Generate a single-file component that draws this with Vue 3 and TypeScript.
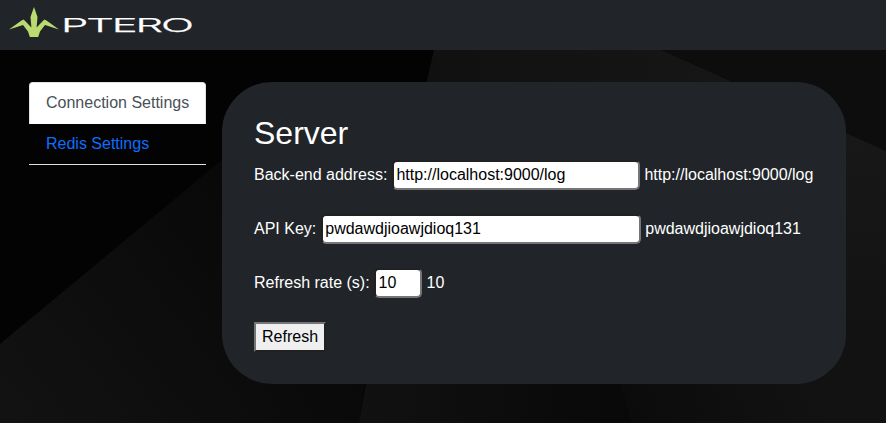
<script setup lang="ts">
import { ref } from 'vue'

const tabs = ['Connection Settings', 'Redis Settings']
const active = ref(0)
const address = ref('http://localhost:9000/log')
const apiKey = ref('pwdawdjioawjdioq131')
const rate = ref('10')
</script>

<template>
  <div class="page">
    <svg class="backdrop" viewBox="0 0 886 423" preserveAspectRatio="none" aria-hidden="true">
      <defs>
        <linearGradient id="lower" gradientUnits="userSpaceOnUse" x1="0" y1="400" x2="260" y2="200">
          <stop offset="0" stop-color="#121212" />
          <stop offset="1" stop-color="#080808" />
        </linearGradient>
        <linearGradient id="upper" x1="0" y1="0" x2="1" y2="0">
          <stop offset="0" stop-color="#101010" />
          <stop offset="1" stop-color="#161616" />
        </linearGradient>
        <linearGradient id="right" x1="0" y1="0" x2="0" y2="1">
          <stop offset="0" stop-color="#181818" />
          <stop offset="1" stop-color="#121212" />
        </linearGradient>
        <linearGradient id="base" x1="0" y1="0" x2="1" y2="0">
          <stop offset="0" stop-color="#111111" />
          <stop offset="1" stop-color="#080808" />
        </linearGradient>
        <linearGradient id="corner" gradientUnits="userSpaceOnUse" x1="620" y1="400" x2="800" y2="340">
          <stop offset="0" stop-color="#0b0b0b" />
          <stop offset="1" stop-color="#121212" />
        </linearGradient>
      </defs>
      <rect width="886" height="423" fill="#030304" />
      <path d="M0 344L222 160L400 160L359 423H0Z" fill="url(#lower)" />
      <path d="M434 50H662L733 82L700 200H400Z" fill="url(#upper)" />
      <path d="M662 50H886V151L846 133L733 82Z" fill="#0d0d0d" />
      <path d="M846 133L886 151V340H800V133Z" fill="url(#right)" />
      <path d="M366 384H620L632 423H359Z" fill="url(#base)" />
      <path d="M620 384L600 320H886V423H632Z" fill="url(#corner)" />
    </svg>

    <header class="navbar">
      <svg class="crane" viewBox="0 0 50 30" aria-hidden="true">
        <path
          d="M25 0L28.5 10L27.6 20.5L35.3 12.5L37.5 13.5L50 22.5L36 18L31 24.5L29.2 30H20.8L19 24.5L14 18L0 22.5L12.5 13.5L14.7 12.5L22.4 20.5L21.5 10Z"
          fill="#bbda70"
        />
      </svg>
      <span class="wordmark"><span class="letters">PTERO</span></span>
    </header>

    <main class="content">
      <nav class="tabs">
        <a
          v-for="(tab, i) in tabs"
          :key="tab"
          class="tab"
          :class="{ active: active === i }"
          @click="active = i"
        >{{ tab }}</a>
      </nav>

      <section class="card">
        <h2>Server</h2>
        <div class="row">
          <label for="address">Back-end address:</label>
          <input id="address" v-model="address" class="address" />
          <span>{{ address }}</span>
        </div>
        <div class="row">
          <label for="key">API Key:</label>
          <input id="key" v-model="apiKey" class="key" />
          <span>{{ apiKey }}</span>
        </div>
        <div class="row">
          <label for="rate">Refresh rate (s):</label>
          <input id="rate" v-model="rate" class="rate" />
          <span>{{ rate }}</span>
        </div>
        <button class="refresh" type="button">Refresh</button>
      </section>
    </main>
  </div>
</template>

<style>
body {
  margin: 0;
  background: #030304;
}
</style>

<style scoped>
* {
  box-sizing: border-box;
}

.page {
  position: relative;
  isolation: isolate;
  height: 423px;
  overflow: hidden;
  font: 16px/24px 'Liberation Sans', Arial, sans-serif;
  color: #fff;
}

.backdrop {
  position: absolute;
  inset: 0;
  z-index: -1;
  width: 100%;
  height: 100%;
}

.navbar {
  display: flex;
  height: 50px;
  padding: 7px 9px;
  background: #212529;
}

.crane {
  width: 50px;
  height: 30px;
}

.wordmark {
  width: 132px;
  height: 30px;
  margin-left: 2px;
}

.letters {
  display: block;
  width: max-content;
  font: 300 18.5px/37px Inter, sans-serif;
  letter-spacing: -0.9px;
  transform: scaleX(2.35);
  transform-origin: 0 0;
  -webkit-text-stroke: 0.25px #fff;
}

.content {
  display: flex;
  align-items: flex-start;
  gap: 16px;
  padding: 32px 40px 0 29px;
}

.tabs {
  display: flex;
  flex-direction: column;
  flex: none;
  width: 177px;
  border-bottom: 1px solid #dee2e6;
}

.tab {
  height: 40px;
  padding: 7px 16px;
  border: 1px solid transparent;
  border-radius: 4px 4px 0 0;
  color: #0d6efd;
  white-space: nowrap;
  cursor: pointer;
}

.tab.active {
  height: 42px;
  padding-top: 8px;
  background: #fff;
  border-color: #dee2e6 #dee2e6 #fff;
  color: #495057;
}

.card {
  flex: none;
  width: 624px;
  height: 302px;
  padding: 32px;
  border-radius: 50px;
  background: #212529;
  white-space: nowrap;
}

h2 {
  margin: 0 0 8px;
  font-size: 32px;
  font-weight: 400;
  line-height: 38px;
}

.row {
  display: flex;
  align-items: center;
  height: 30px;
  margin-bottom: 24px;
}

.row span {
  margin-left: 4px;
}

input {
  height: 30px;
  margin: 0 0 0 5px;
  padding: 1px 2px;
  border: 2px solid;
  border-color: #212121 #767676 #767676 #212121;
  border-radius: 5px;
  background: #fff;
  color: #000;
  font: inherit;
}

.address {
  width: 248px;
}

.key {
  width: 320px;
}

.rate {
  width: 48px;
  margin-left: 4px;
  padding-left: 3px;
}

.row .rate + span {
  margin-left: 5px;
}

.refresh {
  display: block;
  width: 72px;
  height: 30px;
  padding: 1px 6px;
  border: 2px solid;
  border-color: #767676 #212121 #212121 #767676;
  border-radius: 0;
  background: #efefef;
  color: #000;
  font: inherit;
}
</style>
